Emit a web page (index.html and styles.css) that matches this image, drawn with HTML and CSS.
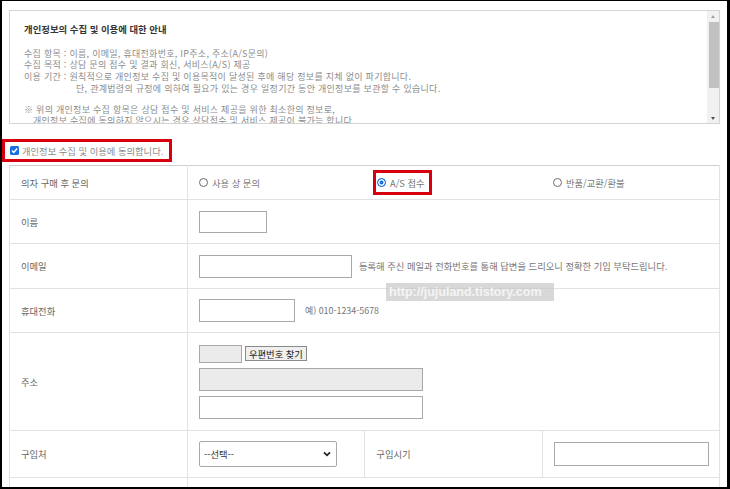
FILE: index.html
```html
<!DOCTYPE html>
<html lang="ko">
<head>
<meta charset="utf-8">
<title>문의 접수</title>
<link rel="stylesheet" href="styles.css">
</head>
<body>
<div class="frame">
  <div class="notice">
    <div class="notice-text">
      <p class="notice-title">개인정보의 수집 및 이용에 대한 안내</p>
      <p>수집 항목 : 이름, 이메일, 휴대전화번호, IP주소, 주소(A/S문의)</p>
      <p>수집 목적 : 상담 문의 접수 및 결과 회신, 서비스(A/S) 제공</p>
      <p>이용 기간 : 원칙적으로 개인정보 수집 및 이용목적이 달성된 후에 해당 정보를 지체 없이 파기합니다.</p>
      <p class="indent">단, 관계법령의 규정에 의하여 필요가 있는 경우 일정기간 동안 개인정보를 보관할 수 있습니다.</p>
      <p class="gap">※ 위의 개인정보 수집 항목은 상담 접수 및 서비스 제공을 위한 최소한의 정보로,</p>
      <p class="indent2">개인정보 수집에 동의하지 않으시는 경우 상담접수 및 서비스 제공이 불가능 합니다.</p>
    </div>
    <div class="scrollbar">
      <span class="arrow arrow-up"></span>
      <span class="thumb"></span>
      <span class="track"></span>
      <span class="arrow arrow-down"></span>
    </div>
  </div>

  <label class="agree highlight">
    <span class="checkbox"><svg width="9" height="9" viewBox="0 0 9 9"><path d="M2 4.6 L3.8 6.4 L7.2 2.6" fill="none" stroke="#fff" stroke-width="1.5"/></svg></span>
    <span>개인정보 수집 및 이용에 동의합니다.</span>
  </label>

  <table class="form">
    <tr class="row-type">
      <th>의자 구매 후 문의</th>
      <td colspan="3">
        <div class="radios">
          <label class="radio-item ri-1"><span class="radio"></span><span>사용 상 문의</span></label>
          <label class="radio-item ri-2"><span class="radio-box highlight"><span class="radio checked"></span><span>A/S 접수</span></span></label>
          <label class="radio-item"><span class="radio"></span><span>반품/교환/환불</span></label>
        </div>
      </td>
    </tr>
    <tr class="row-std">
      <th>이름</th>
      <td colspan="3"><input class="inp inp-name" type="text"></td>
    </tr>
    <tr class="row-std row-email">
      <th>이메일</th>
      <td colspan="3"><div class="field-line"><input class="inp inp-email" type="text"><span class="hint">등록해 주신 메일과 전화번호를 통해 답변을 드리오니 정확한 기입 부탁드립니다.</span></div></td>
    </tr>
    <tr class="row-std">
      <th>휴대전화</th>
      <td colspan="3"><div class="field-line"><input class="inp inp-phone" type="text"><span class="hint hint-phone">예) 010-1234-5678</span></div></td>
    </tr>
    <tr class="row-addr">
      <th>주소</th>
      <td colspan="3">
        <div class="addr">
          <div class="zip-line"><input class="inp inp-zip" type="text" readonly><button class="zip-btn" type="button">우편번호 찾기</button></div>
          <input class="inp inp-addr1" type="text" readonly>
          <input class="inp inp-addr2" type="text">
        </div>
      </td>
    </tr>
    <tr class="row-buy">
      <th>구입처</th>
      <td>
        <div class="select-wrap">
          <select class="sel"><option>--선택--</option></select>
          <svg class="chev" width="8" height="6" viewBox="0 0 8 6"><path d="M1 1.3 L4 4.3 L7 1.3" fill="none" stroke="#222" stroke-width="1.8"/></svg>
        </div>
      </td>
      <th class="th-mid">구입시기</th>
      <td><input class="inp inp-date" type="text"></td>
    </tr>
    <tr class="row-last">
      <th></th>
      <td colspan="3"></td>
    </tr>
  </table>

  <div class="watermark">http://jujuland.tistory.com</div>
</div>
</body>
</html>
```

FILE: styles.css
```css
* { box-sizing: border-box; }
html, body { margin: 0; padding: 0; background: #fff; }
body {
  font-family: "Noto Sans CJK KR", "Noto Sans", sans-serif;
  font-size: 9.3px;
  color: #777;
}
.frame {
  position: relative;
  width: 730px;
  height: 489px;
  overflow: hidden;
  border-left: 2px solid #000;
  border-top: 1px solid #000;
  border-right: 3px solid #000;
  border-bottom: 2px solid #000;
  padding: 9px 7px 0 7px;
}
.notice {
  display: flex;
  height: 114px;
  border: 1px solid #d4d4d4;
  background: #fff;
}
.notice-text {
  flex: 1;
  overflow: hidden;
  padding: 13px 0 0 14px;
  color: #8c8c8c;
  font-size: 9px;
  letter-spacing: 0.28px;
  line-height: 11.7px;
}
.notice-text p { margin: 0; white-space: nowrap; }
.notice-text .notice-title {
  color: #333;
  font-weight: bold;
  font-size: 9.4px;
  letter-spacing: 0;
  margin-bottom: 12px;
}
.notice-text .indent { padding-left: 52px; }
.notice-text .gap { margin-top: 9px; }
.notice-text .indent2 { padding-left: 9px; }
.scrollbar {
  width: 12px;
  display: flex;
  flex-direction: column;
  align-items: center;
  background: #f1f1f1;
}
.arrow {
  height: 11px;
  width: 12px;
  position: relative;
}
.arrow::after {
  content: "";
  position: absolute;
  left: 4px;
  width: 0; height: 0;
  border-left: 2.5px solid transparent;
  border-right: 2.5px solid transparent;
}
.arrow-up::after { top: 4px; border-bottom: 3px solid #a3a3a3; }
.arrow-down::after { top: 5px; border-top: 3px solid #505050; }
.thumb {
  width: 10px;
  height: 66px;
  margin-left: 2px;
  background: #c1c1c1;
}
.track { flex: 1; }

.highlight { border: 3px solid #d8000f; }
.agree {
  display: flex;
  align-items: center;
  gap: 3px;
  width: 170px;
  height: 23px;
  margin: 15px 0 0 -7px;
  padding: 0 0 0 5px;
  color: #8a8a8a;
  white-space: nowrap;
}
.checkbox {
  width: 9px;
  height: 9px;
  border-radius: 1.5px;
  background: #1a6fdf;
  display: flex;
  flex: none;
}

.form {
  width: 711px;
  margin-top: 3px;
  border-collapse: collapse;
  border-top: 1px solid #cfcfcf;
  border-left: 1px solid #e2e2e2;
  border-right: 1px solid #cfcfcf;
  table-layout: fixed;
}
.form th, .form td {
  border-bottom: 1px solid #e2e2e2;
  padding: 0 11px;
  vertical-align: middle;
  text-align: left;
  font-weight: normal;
}
.form th {
  width: 178px;
  color: #666;
  padding-left: 11px;
  border-right: 1px solid #e2e2e2;
}
.form td { border-right: 1px solid #e2e2e2; }
.form .th-mid { border-left: 1px solid #e2e2e2; }
.row-type th, .row-type td { height: 34px; }
.row-std th, .row-std td { height: 44px; }
.row-email th, .row-email td { height: 45px; }
.row-addr th, .row-addr td { height: 98px; }
.row-buy th, .row-buy td { height: 47px; }
.row-last th, .row-last td { height: 20px; }

.radios { display: flex; }
.radio-item {
  flex: none;
  display: flex;
  align-items: center;
  gap: 4px;
  color: #777;
  white-space: nowrap;
}
.ri-1 { width: 178px; }
.ri-2 { width: 176px; }
.radio-box {
  display: flex;
  align-items: center;
  gap: 4px;
  height: 25px;
  width: 59px;
  padding-left: 1px;
  margin-left: -4px;
}
.radio {
  width: 9px;
  height: 9px;
  border-radius: 50%;
  border: 1px solid #6b6b6b;
  background: #fff;
  flex: none;
}
.radio.checked {
  border: 1px solid #1a6fdf;
  background: #1a6fdf;
  box-shadow: inset 0 0 0 1.5px #fff;
}

.inp {
  display: block;
  border: 1px solid #a9a9a9;
  border-radius: 0;
  background: #fff;
  padding: 0;
  margin: 0;
  font: inherit;
  outline: none;
}
.inp-name { width: 68px; height: 22px; }
.inp-email { width: 153px; height: 23px; }
.inp-phone { width: 96px; height: 23px; }
.inp-zip { width: 43px; height: 18px; background: #ebebeb; }
.inp-addr1 { width: 224px; height: 23px; background: #ebebeb; margin-top: 5px; }
.inp-addr2 { width: 224px; height: 23px; margin-top: 5px; }
.inp-date { width: 155px; height: 24px; }

.field-line { display: flex; align-items: center; }
.hint { margin-left: 7px; color: #777; white-space: nowrap; }
.hint-phone { margin-left: 10px; font-size: 8.9px; }

.addr { display: flex; flex-direction: column; }
.zip-line { display: flex; align-items: center; gap: 3px; }
.zip-btn {
  height: 15px;
  padding: 0 3px;
  border: 1px solid #8a8a8a;
  border-radius: 0;
  background: #efefef;
  font: inherit;
  color: #222;
  line-height: 12px;
}

.select-wrap { position: relative; width: 138px; height: 26px; }
.sel {
  -webkit-appearance: none;
  appearance: none;
  width: 138px;
  height: 26px;
  border: 1px solid #a9a9a9;
  border-radius: 2px;
  background: #fff;
  font: inherit;
  color: #333;
  padding: 0 0 0 4px;
  margin: 0;
}
.chev { position: absolute; right: 6px; top: 10px; }

.watermark {
  position: absolute;
  left: 384px;
  top: 282px;
  width: 168px;
  height: 18px;
  background: rgba(200, 200, 200, 0.7);
  color: #f4f4f4;
  font-family: "Liberation Sans", Arial, sans-serif;
  font-weight: bold;
  font-size: 12.5px;
  line-height: 18px;
  padding-left: 3px;
  white-space: nowrap;
}
```
